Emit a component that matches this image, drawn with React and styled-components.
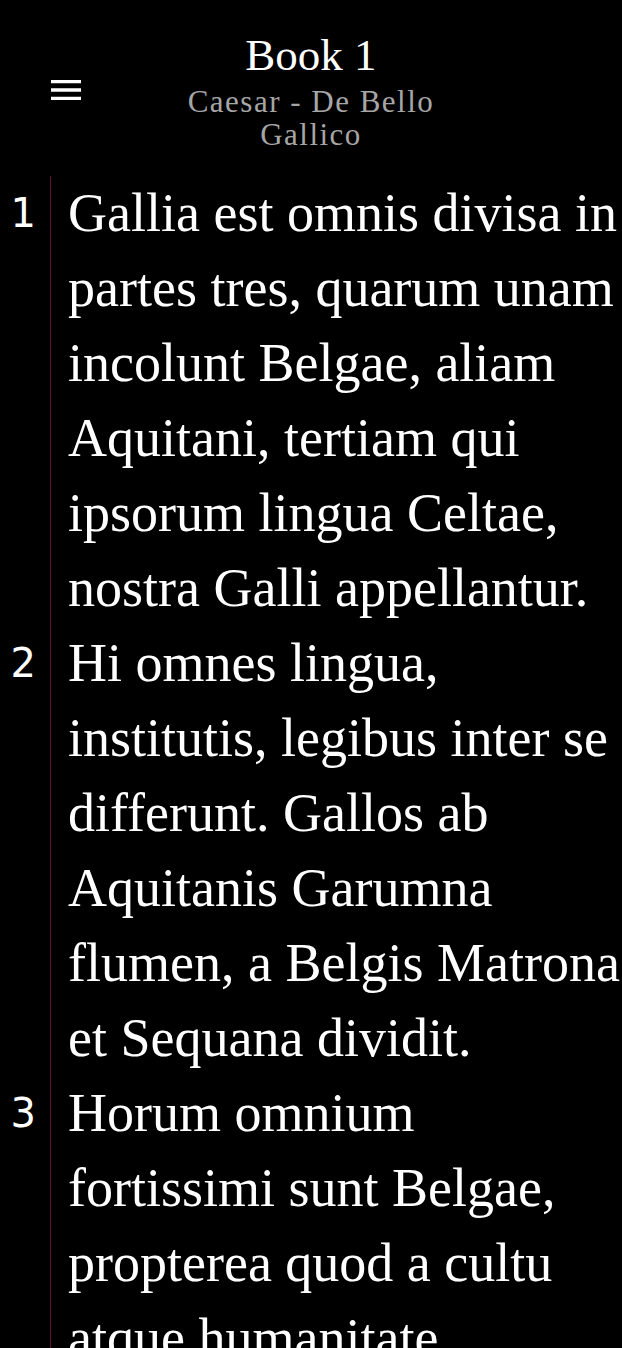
import React from 'react'
import styled, { createGlobalStyle } from 'styled-components'
import { MdMenu } from 'react-icons/md'

const GlobalStyle = createGlobalStyle`
  html, body {
    margin: 0;
    padding: 0;
    background: #000;
  }

  body {
    color: #fff;
    font-family: "Liberation Serif", "Times New Roman", serif;
  }
`

const Header = styled.header`
  display: grid;
  grid-template-columns: 1fr 2fr 1fr;
  align-items: center;
  padding: 29px 0 25px;
`

const MenuButton = styled.button`
  justify-self: start;
  display: flex;
  padding: 0;
  margin-left: 46px;
  border: none;
  background: none;
  color: #fff;
  cursor: pointer;
`

const TitleBlock = styled.div`
  text-align: center;
`

const Title = styled.h1`
  margin: 0 0 4px;
  font-size: 45px;
  font-weight: normal;
  line-height: 52px;
`

const Subtitle = styled.div`
  font-size: 31px;
  line-height: 33px;
  letter-spacing: 1.5px;
  color: #a6a6a6;
`

const Verses = styled.main`
  display: flex;
  flex-direction: column;
`

const Verse = styled.div`
  display: grid;
  grid-template-columns: 50px 1fr;
`

const VerseNumber = styled.span`
  padding-right: 14px;
  text-align: right;
  font-family: "DejaVu Sans", sans-serif;
  font-size: 40px;
  line-height: 75px;
`

const VerseText = styled.p`
  margin: 0;
  padding-left: 17px;
  border-left: 1px solid #620c38;
  font-size: 54px;
  line-height: 75px;
`

const verses = [
  'Gallia est omnis divisa in partes tres, quarum unam incolunt Belgae, aliam Aquitani, tertiam qui ipsorum lingua Celtae, nostra Galli appellantur.',
  'Hi omnes lingua, institutis, legibus inter se differunt. Gallos ab Aquitanis Garumna flumen, a Belgis Matrona et Sequana dividit.',
  'Horum omnium fortissimi sunt Belgae, propterea quod a cultu atque humanitate provinciae longissime absunt, minimeque ad eos mercatores saepe commeant atque ea quae ad effeminandos animos pertinent important, proximique sunt Germanis, qui trans Rhenum incolunt, quibuscum continenter bellum gerunt.',
  'Qua de causa Helvetii quoque reliquos Gallos virtute praecedunt, quod fere cotidianis proeliis cum Germanis contendunt, cum aut suis finibus eos prohibent aut ipsi in eorum finibus bellum gerunt.',
]

const App = () => (
  <>
    <GlobalStyle />
    <Header>
      <MenuButton aria-label="Menu">
        <MdMenu size={40} />
      </MenuButton>
      <TitleBlock>
        <Title>Book 1</Title>
        <Subtitle>Caesar - De Bello Gallico</Subtitle>
      </TitleBlock>
    </Header>
    <Verses>
      {verses.map((text, i) => (
        <Verse key={i}>
          <VerseNumber>{i + 1}</VerseNumber>
          <VerseText>{text}</VerseText>
        </Verse>
      ))}
    </Verses>
  </>
)

export default App
